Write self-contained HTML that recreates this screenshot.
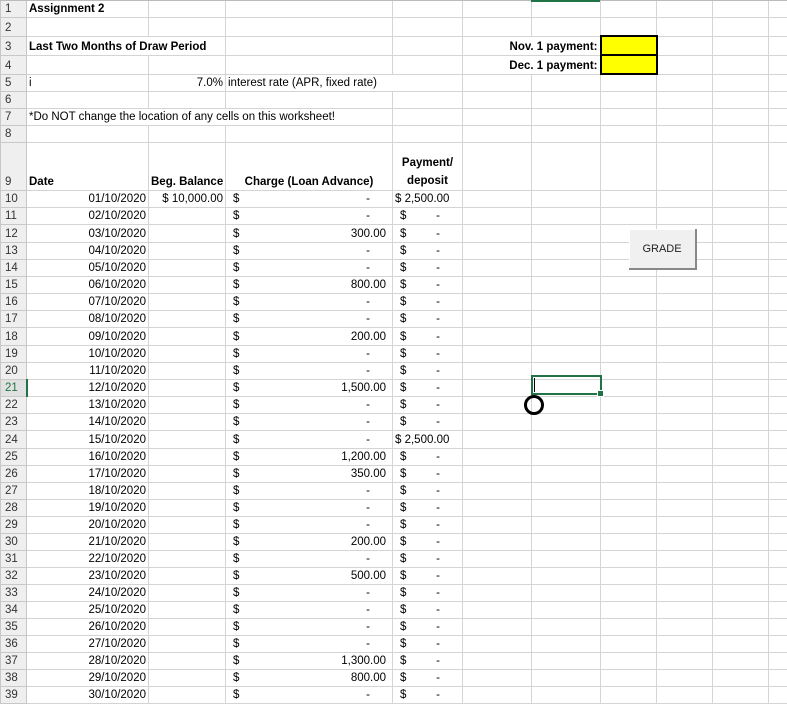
<!DOCTYPE html>
<html><head><meta charset="utf-8"><style>
body{margin:0;background:#fff;width:787px;height:704px;overflow:hidden;position:relative;font-family:"Liberation Sans",Arial,sans-serif;font-size:11.5px;color:#000}
table{border-collapse:collapse;table-layout:fixed;position:absolute;left:0;top:0;width:798px}
td{border:1px solid #d4d4d4;padding:0 2px;white-space:nowrap;overflow:visible;height:16px;line-height:16px;vertical-align:bottom}
td.h{background:#efefef;color:#333;padding-left:4px;border-color:#c8c8c8;font-size:11.5px}
td.r{text-align:right}
td.n{border-right:none}
.acc{display:flex;justify-content:space-between;padding:0 4px 0 5px}
.acc i{font-style:normal;padding-right:16px}
.acc i.v{padding-right:0}
b{font-weight:bold}
tr.t18 td{height:17px}
</style></head><body>
<div style="position:absolute;left:0;top:0;width:787px;height:1px;background:#bbb;z-index:3"></div>
<div style="position:absolute;left:531px;top:0;width:69px;height:2px;background:#217346;z-index:3"></div>
<table>
<colgroup><col style="width:26px"><col style="width:122px"><col style="width:77px"><col style="width:167px"><col style="width:70px"><col style="width:69px"><col style="width:69px"><col style="width:56px"><col style="width:56px"><col style="width:56px"><col style="width:30px"></colgroup>
<tr><td class="h">1</td><td class="n"><b>Assignment 2</b></td><td></td><td></td><td></td><td></td><td></td><td></td><td></td><td></td><td></td></tr>
<tr class="t18"><td class="h">2</td><td></td><td></td><td></td><td></td><td></td><td></td><td></td><td></td><td></td><td></td></tr>
<tr class="t18"><td class="h">3</td><td class="n" colspan="2"><b>Last Two Months of Draw Period</b></td><td></td><td></td><td class="r" colspan="2"><b>Nov. 1 payment:</b></td><td style="background:#ff0;border:2px solid #000"></td><td></td><td></td><td></td></tr>
<tr class="t18"><td class="h">4</td><td></td><td></td><td></td><td></td><td class="r" colspan="2"><b>Dec. 1 payment:</b></td><td style="background:#ff0;border:2px solid #000"></td><td></td><td></td><td></td></tr>
<tr><td class="h">5</td><td>i</td><td class="r">7.0%</td><td class="n" colspan="2">interest rate (APR, fixed rate)</td><td></td><td></td><td></td><td></td><td></td></tr>
<tr><td class="h">6</td><td></td><td></td><td></td><td></td><td></td><td></td><td></td><td></td><td></td><td></td></tr>
<tr><td class="h">7</td><td colspan="3">*Do NOT change the location of any cells on this worksheet!</td><td></td><td></td><td></td><td></td><td></td><td></td><td></td></tr>
<tr><td class="h">8</td><td></td><td></td><td></td><td></td><td></td><td></td><td></td><td></td><td></td><td></td></tr>
<tr><td class="h" style="height:47px">9</td><td><b>Date</b></td><td class="r"><b>Beg. Balance</b></td><td style="text-align:center"><b>Charge (Loan Advance)</b></td><td style="text-align:center;line-height:18px;white-space:normal"><b>Payment/<br>deposit</b></td><td></td><td></td><td></td><td></td><td></td><td></td></tr>
<tr><td class="h">10</td><td class="r">01/10/2020</td><td class="r">$ 10,000.00</td><td><div class="acc"><span>$</span><i>-</i></div></td><td>$ 2,500.00</td><td></td><td></td><td></td><td></td><td></td><td></td></tr>
<tr><td class="h">11</td><td class="r">02/10/2020</td><td></td><td><div class="acc"><span>$</span><i>-</i></div></td><td><div class="acc"><span>$</span><i>-</i></div></td><td></td><td></td><td></td><td></td><td></td><td></td></tr>
<tr class="t18"><td class="h">12</td><td class="r">03/10/2020</td><td></td><td><div class="acc"><span>$</span><i class="v">300.00</i></div></td><td><div class="acc"><span>$</span><i>-</i></div></td><td></td><td></td><td></td><td></td><td></td><td></td></tr>
<tr><td class="h">13</td><td class="r">04/10/2020</td><td></td><td><div class="acc"><span>$</span><i>-</i></div></td><td><div class="acc"><span>$</span><i>-</i></div></td><td></td><td></td><td></td><td></td><td></td><td></td></tr>
<tr><td class="h">14</td><td class="r">05/10/2020</td><td></td><td><div class="acc"><span>$</span><i>-</i></div></td><td><div class="acc"><span>$</span><i>-</i></div></td><td></td><td></td><td></td><td></td><td></td><td></td></tr>
<tr><td class="h">15</td><td class="r">06/10/2020</td><td></td><td><div class="acc"><span>$</span><i class="v">800.00</i></div></td><td><div class="acc"><span>$</span><i>-</i></div></td><td></td><td></td><td></td><td></td><td></td><td></td></tr>
<tr><td class="h">16</td><td class="r">07/10/2020</td><td></td><td><div class="acc"><span>$</span><i>-</i></div></td><td><div class="acc"><span>$</span><i>-</i></div></td><td></td><td></td><td></td><td></td><td></td><td></td></tr>
<tr><td class="h">17</td><td class="r">08/10/2020</td><td></td><td><div class="acc"><span>$</span><i>-</i></div></td><td><div class="acc"><span>$</span><i>-</i></div></td><td></td><td></td><td></td><td></td><td></td><td></td></tr>
<tr class="t18"><td class="h">18</td><td class="r">09/10/2020</td><td></td><td><div class="acc"><span>$</span><i class="v">200.00</i></div></td><td><div class="acc"><span>$</span><i>-</i></div></td><td></td><td></td><td></td><td></td><td></td><td></td></tr>
<tr><td class="h">19</td><td class="r">10/10/2020</td><td></td><td><div class="acc"><span>$</span><i>-</i></div></td><td><div class="acc"><span>$</span><i>-</i></div></td><td></td><td></td><td></td><td></td><td></td><td></td></tr>
<tr><td class="h">20</td><td class="r">11/10/2020</td><td></td><td><div class="acc"><span>$</span><i>-</i></div></td><td><div class="acc"><span>$</span><i>-</i></div></td><td></td><td></td><td></td><td></td><td></td><td></td></tr>
<tr><td class="h" style="background:#e1e1e1;color:#217346;border-right:2px solid #217346">21</td><td class="r">12/10/2020</td><td></td><td><div class="acc"><span>$</span><i class="v">1,500.00</i></div></td><td><div class="acc"><span>$</span><i>-</i></div></td><td></td><td></td><td></td><td></td><td></td><td></td></tr>
<tr><td class="h">22</td><td class="r">13/10/2020</td><td></td><td><div class="acc"><span>$</span><i>-</i></div></td><td><div class="acc"><span>$</span><i>-</i></div></td><td></td><td></td><td></td><td></td><td></td><td></td></tr>
<tr><td class="h">23</td><td class="r">14/10/2020</td><td></td><td><div class="acc"><span>$</span><i>-</i></div></td><td><div class="acc"><span>$</span><i>-</i></div></td><td></td><td></td><td></td><td></td><td></td><td></td></tr>
<tr class="t18"><td class="h">24</td><td class="r">15/10/2020</td><td></td><td><div class="acc"><span>$</span><i>-</i></div></td><td>$ 2,500.00</td><td></td><td></td><td></td><td></td><td></td><td></td></tr>
<tr><td class="h">25</td><td class="r">16/10/2020</td><td></td><td><div class="acc"><span>$</span><i class="v">1,200.00</i></div></td><td><div class="acc"><span>$</span><i>-</i></div></td><td></td><td></td><td></td><td></td><td></td><td></td></tr>
<tr><td class="h">26</td><td class="r">17/10/2020</td><td></td><td><div class="acc"><span>$</span><i class="v">350.00</i></div></td><td><div class="acc"><span>$</span><i>-</i></div></td><td></td><td></td><td></td><td></td><td></td><td></td></tr>
<tr><td class="h">27</td><td class="r">18/10/2020</td><td></td><td><div class="acc"><span>$</span><i>-</i></div></td><td><div class="acc"><span>$</span><i>-</i></div></td><td></td><td></td><td></td><td></td><td></td><td></td></tr>
<tr><td class="h">28</td><td class="r">19/10/2020</td><td></td><td><div class="acc"><span>$</span><i>-</i></div></td><td><div class="acc"><span>$</span><i>-</i></div></td><td></td><td></td><td></td><td></td><td></td><td></td></tr>
<tr><td class="h">29</td><td class="r">20/10/2020</td><td></td><td><div class="acc"><span>$</span><i>-</i></div></td><td><div class="acc"><span>$</span><i>-</i></div></td><td></td><td></td><td></td><td></td><td></td><td></td></tr>
<tr><td class="h">30</td><td class="r">21/10/2020</td><td></td><td><div class="acc"><span>$</span><i class="v">200.00</i></div></td><td><div class="acc"><span>$</span><i>-</i></div></td><td></td><td></td><td></td><td></td><td></td><td></td></tr>
<tr><td class="h">31</td><td class="r">22/10/2020</td><td></td><td><div class="acc"><span>$</span><i>-</i></div></td><td><div class="acc"><span>$</span><i>-</i></div></td><td></td><td></td><td></td><td></td><td></td><td></td></tr>
<tr><td class="h">32</td><td class="r">23/10/2020</td><td></td><td><div class="acc"><span>$</span><i class="v">500.00</i></div></td><td><div class="acc"><span>$</span><i>-</i></div></td><td></td><td></td><td></td><td></td><td></td><td></td></tr>
<tr><td class="h">33</td><td class="r">24/10/2020</td><td></td><td><div class="acc"><span>$</span><i>-</i></div></td><td><div class="acc"><span>$</span><i>-</i></div></td><td></td><td></td><td></td><td></td><td></td><td></td></tr>
<tr><td class="h">34</td><td class="r">25/10/2020</td><td></td><td><div class="acc"><span>$</span><i>-</i></div></td><td><div class="acc"><span>$</span><i>-</i></div></td><td></td><td></td><td></td><td></td><td></td><td></td></tr>
<tr><td class="h">35</td><td class="r">26/10/2020</td><td></td><td><div class="acc"><span>$</span><i>-</i></div></td><td><div class="acc"><span>$</span><i>-</i></div></td><td></td><td></td><td></td><td></td><td></td><td></td></tr>
<tr><td class="h">36</td><td class="r">27/10/2020</td><td></td><td><div class="acc"><span>$</span><i>-</i></div></td><td><div class="acc"><span>$</span><i>-</i></div></td><td></td><td></td><td></td><td></td><td></td><td></td></tr>
<tr><td class="h">37</td><td class="r">28/10/2020</td><td></td><td><div class="acc"><span>$</span><i class="v">1,300.00</i></div></td><td><div class="acc"><span>$</span><i>-</i></div></td><td></td><td></td><td></td><td></td><td></td><td></td></tr>
<tr><td class="h">38</td><td class="r">29/10/2020</td><td></td><td><div class="acc"><span>$</span><i class="v">800.00</i></div></td><td><div class="acc"><span>$</span><i>-</i></div></td><td></td><td></td><td></td><td></td><td></td><td></td></tr>
<tr><td class="h">39</td><td class="r">30/10/2020</td><td></td><td><div class="acc"><span>$</span><i>-</i></div></td><td><div class="acc"><span>$</span><i>-</i></div></td><td></td><td></td><td></td><td></td><td></td><td></td></tr>
</table>
<div style="position:absolute;left:629px;top:229px;width:66px;height:39px;background:#f0f0f0;border-right:2px solid #888;border-bottom:2px solid #888;box-shadow:inset 1px 1px 0 #fff;display:flex;align-items:center;justify-content:center;font-size:11px;color:#222">GRADE</div>
<div style="position:absolute;left:531px;top:375px;width:67px;height:16px;border:2px solid #217346"></div>
<div style="position:absolute;left:597px;top:390px;width:5px;height:5px;background:#217346;border:1px solid #fff"></div>
<div style="position:absolute;left:534px;top:378px;width:1px;height:14px;background:#000"></div>
<div style="position:absolute;left:524px;top:395px;width:14px;height:14px;border:3px solid #000;border-radius:50%"></div>
</body></html>
